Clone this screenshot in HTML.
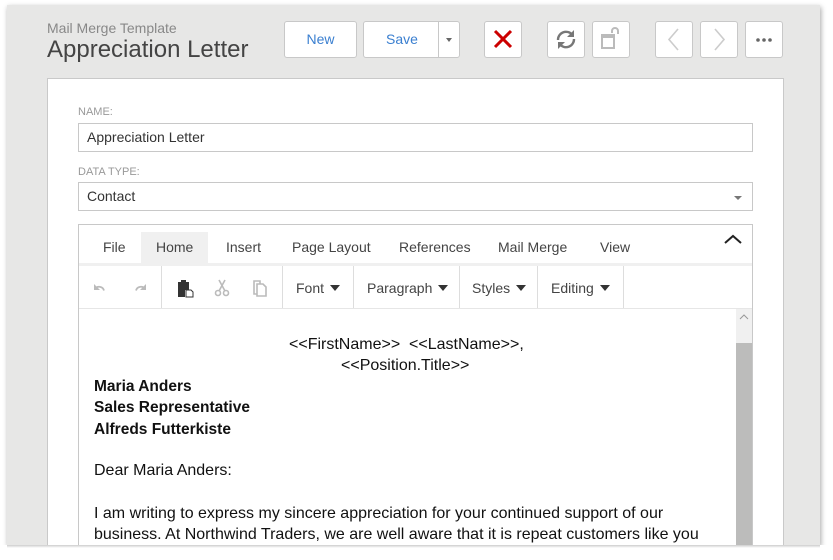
<!DOCTYPE html>
<html><head><meta charset="utf-8"><style>
*{box-sizing:border-box;margin:0;padding:0}
html,body{width:833px;height:560px;overflow:hidden}
body{background:#fff;font-family:"Liberation Sans",sans-serif;position:relative}
#clip{position:absolute;left:0;top:0;width:833px;height:545px;overflow:hidden}
.abs{position:absolute}
#panel{left:7px;top:5px;width:813px;height:540px;background:#e7e7e6;box-shadow:1px 2px 5px rgba(0,0,0,.35)}
.btn{position:absolute;top:21px;height:37px;background:#fff;border:1px solid #c8c8c8;border-radius:3px}
.blue{color:#3a7fd0;font-size:14px;text-align:center;line-height:35px}
#card{left:47px;top:78px;width:737px;height:480px;background:#fff;border:1px solid #c9c9c9}
.lbl{position:absolute;font-size:11px;color:#999}
.inp{position:absolute;left:78px;width:675px;height:29px;border:1px solid #c8c8c8;font-size:14px;color:#333;padding-left:8px;line-height:27px}
.tab{position:absolute;top:232px;height:31px;line-height:31px;font-size:14px;color:#444}
.sep{position:absolute;top:266px;width:1px;height:42px;background:#ddd}
.tb{position:absolute;top:280px;font-size:14px;color:#444}
.tri{display:inline-block;width:0;height:0;border-left:5px solid transparent;border-right:5px solid transparent;border-top:6px solid #333;vertical-align:2px;margin-left:6px}
.doc{position:absolute;font-size:16px;color:#111;white-space:nowrap}
</style></head><body>
<div id="clip">
<div id="panel" class="abs"></div>
<div class="abs" style="left:47px;top:20px;font-size:14px;color:#888">Mail Merge Template</div>
<div class="abs" style="left:47px;top:36px;font-size:24px;color:#444">Appreciation Letter</div>
<div class="btn blue" style="left:284px;width:73px">New</div>
<div class="btn blue" style="left:363px;width:97px;text-align:left;padding-left:22px">Save</div>
<div class="abs" style="left:438px;top:21px;width:1px;height:37px;background:#c8c8c8"></div>
<div class="abs" style="left:446px;top:38px;border-left:3.5px solid transparent;border-right:3.5px solid transparent;border-top:4px solid #666"></div>
<div class="btn" style="left:484px;width:38px"><svg width="36" height="35" viewBox="0 0 36 35"><path d="M10 9L26 25M26 9L10 25" stroke="#cc0000" stroke-width="3"/></svg></div>
<div class="btn" style="left:547px;width:38px"><svg width="36" height="35" viewBox="0 0 36 35"><path d="M10 18a8 8 0 0 1 14-5.5M26 17a8 8 0 0 1-14 5.5" stroke="#777" stroke-width="2.4" fill="none"/><path d="M26 8v7h-7z M10 27v-7h7z" fill="#777"/></svg></div>
<div class="btn" style="left:592px;width:38px"><svg width="36" height="35" viewBox="0 0 36 35"><rect x="9" y="13" width="12" height="13" fill="none" stroke="#bbb" stroke-width="2"/><rect x="9" y="13" width="12" height="3" fill="#bbb"/><path d="M19 11v-2a3 3 0 0 1 6 0v3" stroke="#bbb" stroke-width="2" fill="none"/></svg></div>
<div class="btn" style="left:655px;width:38px"><svg width="36" height="35" viewBox="0 0 36 35"><path d="M22 7L13 17.5L22 28" stroke="#ccc" stroke-width="1.6" fill="none"/></svg></div>
<div class="btn" style="left:700px;width:38px"><svg width="36" height="35" viewBox="0 0 36 35"><path d="M14 7L23 17.5L14 28" stroke="#ccc" stroke-width="1.6" fill="none"/></svg></div>
<div class="btn" style="left:745px;width:38px"><svg width="36" height="35" viewBox="0 0 36 35"><circle cx="12" cy="18" r="1.8" fill="#666"/><circle cx="18" cy="18" r="1.8" fill="#666"/><circle cx="24" cy="18" r="1.8" fill="#666"/></svg></div>
<div id="card" class="abs"></div>
<div class="lbl" style="left:78px;top:106px">NAME:</div>
<div class="inp" style="top:123px">Appreciation Letter</div>
<div class="lbl" style="left:78px;top:166px">DATA TYPE:</div>
<div class="inp" style="top:182px">Contact</div>
<div class="abs" style="left:734px;top:196px;border-left:4px solid transparent;border-right:4px solid transparent;border-top:4px solid #777"></div>
<div class="abs" style="left:78px;top:224px;width:675px;height:340px;border:1px solid #c8c8c8;background:#fff"></div>
<div class="abs" style="left:141px;top:232px;width:67px;height:31px;background:#f0f0f0"></div>
<div class="tab" style="left:103px">File</div>
<div class="tab" style="left:156px">Home</div>
<div class="tab" style="left:226px">Insert</div>
<div class="tab" style="left:292px">Page Layout</div>
<div class="tab" style="left:399px">References</div>
<div class="tab" style="left:498px">Mail Merge</div>
<div class="tab" style="left:600px">View</div>
<svg class="abs" style="left:723px;top:233px" width="20" height="12"><path d="M2 10L10 3L18 10" stroke="#222" stroke-width="2" fill="none"/></svg>
<div class="abs" style="left:79px;top:263px;width:673px;height:3px;background:#f0f0f0"></div>
<div class="abs" style="left:79px;top:308px;width:673px;height:1px;background:#e6e6e6"></div>
<div class="sep" style="left:161px"></div><div class="sep" style="left:282px"></div><div class="sep" style="left:353px"></div><div class="sep" style="left:459px"></div><div class="sep" style="left:537px"></div><div class="sep" style="left:623px"></div>
<svg class="abs" style="left:92px;top:280px" width="60" height="16"><path d="M3 9a5 5 0 0 1 9 1.5" stroke="#bbb" stroke-width="1.8" fill="none"/><path d="M2 4v6h6z" fill="#bbb"/><path d="M53 9a5 5 0 0 0-9 1.5" stroke="#bbb" stroke-width="1.8" fill="none"/><path d="M54 4v6h-6z" fill="#bbb"/></svg>
<svg class="abs" style="left:176px;top:278px" width="100" height="20"><path d="M2 4h3v-2h5v2h3v8h-4v7h-7z" fill="#333"/><path d="M10 12h5l2 2v5h-7z" fill="#fff" stroke="#333" stroke-width="1"/><circle cx="42" cy="15" r="2.5" fill="none" stroke="#bbb" stroke-width="1.6"/><circle cx="50" cy="15" r="2.5" fill="none" stroke="#bbb" stroke-width="1.6"/><path d="M43 13L49 2M49 13L43 2" stroke="#bbb" stroke-width="1.6"/><path d="M81 6h6l3 3v9h-9z M78 3h6v3h-3v10h-3z" fill="none" stroke="#bbb" stroke-width="1.6"/></svg>
<div class="tb" style="left:296px">Font<span class="tri"></span></div>
<div class="tb" style="left:367px">Paragraph<span class="tri"></span></div>
<div class="tb" style="left:472px">Styles<span class="tri"></span></div>
<div class="tb" style="left:551px">Editing<span class="tri"></span></div>
<div class="abs" style="left:736px;top:309px;width:16px;height:260px;background:#f0f0f0"></div>
<div class="abs" style="left:736px;top:343px;width:16px;height:220px;background:#bcbcbb"></div>
<svg class="abs" style="left:739px;top:313px" width="10" height="8"><path d="M1 6L5 2L9 6" stroke="#999" fill="none"/></svg>
<div class="doc" style="left:289px;top:336px">&lt;&lt;FirstName&gt;&gt; &nbsp;&lt;&lt;LastName&gt;&gt;,</div>
<div class="doc" style="left:341px;top:357px">&lt;&lt;Position.Title&gt;&gt;</div>
<div class="doc" style="left:94px;top:378px;font-weight:bold;font-size:15.5px">Maria Anders</div>
<div class="doc" style="left:94px;top:399px;font-weight:bold;font-size:15.5px">Sales Representative</div>
<div class="doc" style="left:94px;top:421px;font-weight:bold;font-size:15.5px">Alfreds Futterkiste</div>
<div class="doc" style="left:94px;top:462px">Dear Maria Anders:</div>
<div class="doc" style="left:94px;top:505px">I am writing to express my sincere appreciation for your continued support of our</div>
<div class="doc" style="left:94px;top:526px">business. At Northwind Traders, we are well aware that it is repeat customers like you</div>
</div>
<div class="abs" style="left:7px;top:545px;width:813px;height:3px;background:linear-gradient(rgba(0,0,0,.2),rgba(0,0,0,0))"></div>
</body></html>
